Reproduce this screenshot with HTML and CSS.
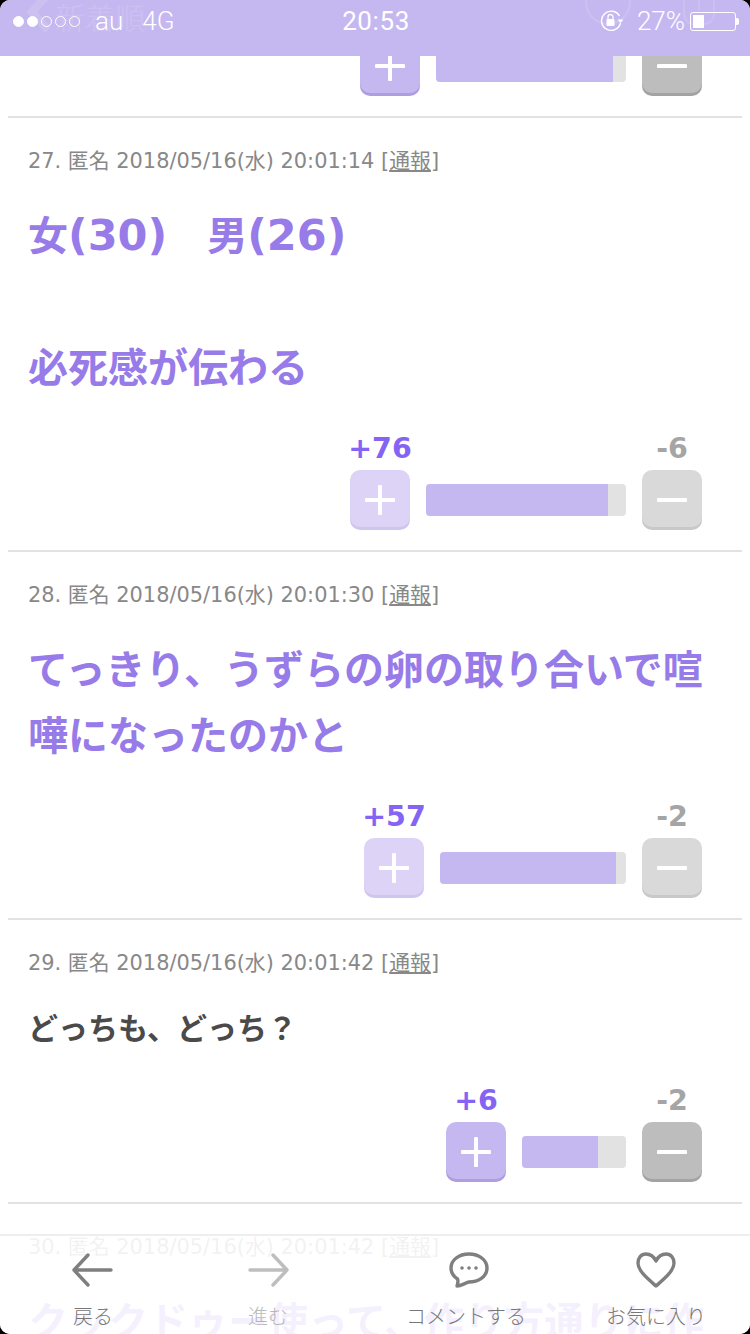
FILE: index.html
```html
<!DOCTYPE html>
<html lang="ja">
<head>
  <meta charset="UTF-8">
  <title>コメント一覧</title>
  <link rel="stylesheet" href="styles.css">
</head>
<body>
  <div class="page">
    <header class="status-bar">
      <div class="ghost-nav">
        <svg class="ghost-back" width="30" height="40" viewBox="0 0 30 40"><path d="M24 -6 L8 12 L24 30" fill="none" stroke="#fff" stroke-width="8"/></svg>
        <span class="ghost-title">新着順</span>
        <svg class="ghost-icons" width="136" height="40" viewBox="0 0 136 40"><circle cx="24" cy="2" r="22" fill="none" stroke="#fff" stroke-width="2"/><rect x="100" y="-14" width="30" height="38" rx="10" fill="none" stroke="#fff" stroke-width="2"/><path d="M115 -4 V10" stroke="#fff" stroke-width="2"/></svg>
      </div>
      <div class="status-left">
        <span class="signal">
          <i class="dot on"></i><i class="dot on"></i><i class="dot"></i><i class="dot"></i><i class="dot"></i>
        </span>
        <span class="carrier">au</span>
        <span class="network">4G</span>
      </div>
      <div class="status-time">20:53</div>
      <div class="status-right">
        <svg width="24" height="22" viewBox="0 0 24 22">
          <path d="M19.5 6 A9.6 9.6 0 1 0 20.5 13" fill="none" stroke="#fff" stroke-width="1.4"/>
          <path d="M17.5 9.5 H23.5 L20.5 13 Z" fill="#fff"/>
          <rect x="6.5" y="9" width="8" height="7" rx="1" fill="#fff"/>
          <path d="M8 9 V7 A2.5 2.5 0 0 1 13 7 V9" fill="none" stroke="#fff" stroke-width="1.3"/>
        </svg>
        <span class="battery-pct">27%</span>
        <span class="battery"><span class="battery-level"></span></span>
        <span class="battery-cap"></span>
      </div>
    </header>

    <main class="comments">
      <section class="comment comment-cut">
        <div class="votes">
          <div class="vote">
            <button class="vote-btn up"><span class="face"><svg width="30" height="30" viewBox="0 0 30 30"><path d="M1.5 15 H28.5 M15 1.5 V28.5" stroke="#fff" stroke-width="4" stroke-linecap="round"/></svg></span></button>
          </div>
          <div class="bar" style="width: 190px"><div class="bar-fill" style="width: 177px"></div></div>
          <div class="vote">
            <button class="vote-btn down"><span class="face"><svg width="30" height="30" viewBox="0 0 30 30"><path d="M1.5 15 H28.5" stroke="#fff" stroke-width="4" stroke-linecap="round"/></svg></span></button>
          </div>
        </div>
      </section>

      <section class="comment">
        <p class="meta">27. 匿名 2018/05/16(水) 20:01:14 [<a class="report">通報</a>]</p>
        <p class="body-large">女<span class="num">(30)</span>　男<span class="num">(26)</span><br><br>必死感が伝わる</p>
        <div class="votes">
          <div class="vote">
            <span class="count count-up">+76</span>
            <button class="vote-btn up faded"><span class="face"><svg width="30" height="30" viewBox="0 0 30 30"><path d="M1.5 15 H28.5 M15 1.5 V28.5" stroke="#fff" stroke-width="4" stroke-linecap="round"/></svg></span></button>
          </div>
          <div class="bar" style="width: 200px"><div class="bar-fill" style="width: 182px"></div></div>
          <div class="vote">
            <span class="count count-down">-6</span>
            <button class="vote-btn down faded"><span class="face"><svg width="30" height="30" viewBox="0 0 30 30"><path d="M1.5 15 H28.5" stroke="#fff" stroke-width="4" stroke-linecap="round"/></svg></span></button>
          </div>
        </div>
      </section>

      <section class="comment">
        <p class="meta">28. 匿名 2018/05/16(水) 20:01:30 [<a class="report">通報</a>]</p>
        <p class="body-large">てっきり、うずらの卵の取り合いで喧嘩になったのかと</p>
        <div class="votes">
          <div class="vote">
            <span class="count count-up">+57</span>
            <button class="vote-btn up faded"><span class="face"><svg width="30" height="30" viewBox="0 0 30 30"><path d="M1.5 15 H28.5 M15 1.5 V28.5" stroke="#fff" stroke-width="4" stroke-linecap="round"/></svg></span></button>
          </div>
          <div class="bar" style="width: 186px"><div class="bar-fill" style="width: 176px"></div></div>
          <div class="vote">
            <span class="count count-down">-2</span>
            <button class="vote-btn down faded"><span class="face"><svg width="30" height="30" viewBox="0 0 30 30"><path d="M1.5 15 H28.5" stroke="#fff" stroke-width="4" stroke-linecap="round"/></svg></span></button>
          </div>
        </div>
      </section>

      <section class="comment">
        <p class="meta">29. 匿名 2018/05/16(水) 20:01:42 [<a class="report">通報</a>]</p>
        <p class="body-small">どっちも、どっち？</p>
        <div class="votes">
          <div class="vote">
            <span class="count count-up">+6</span>
            <button class="vote-btn up"><span class="face"><svg width="30" height="30" viewBox="0 0 30 30"><path d="M1.5 15 H28.5 M15 1.5 V28.5" stroke="#fff" stroke-width="4" stroke-linecap="round"/></svg></span></button>
          </div>
          <div class="bar" style="width: 104px"><div class="bar-fill" style="width: 76px"></div></div>
          <div class="vote">
            <span class="count count-down">-2</span>
            <button class="vote-btn down"><span class="face"><svg width="30" height="30" viewBox="0 0 30 30"><path d="M1.5 15 H28.5" stroke="#fff" stroke-width="4" stroke-linecap="round"/></svg></span></button>
          </div>
        </div>
      </section>

      <section class="comment">
        <p class="meta">30. 匿名 2018/05/16(水) 20:01:42 [<a class="report">通報</a>]</p>
        <p class="body-large">クックドゥー使って、作り方通りに作</p>
      </section>
    </main>

    <nav class="toolbar">
      <a class="tool">
        <svg width="44" height="36" viewBox="0 0 44 36"><path d="M40 18 H3 M17 3 L3 18 L17 33" fill="none" stroke="#7f7f7f" stroke-width="3.4" stroke-linecap="round" stroke-linejoin="round"/></svg>
        <span>戻る</span>
      </a>
      <a class="tool disabled">
        <svg width="44" height="36" viewBox="0 0 44 36"><path d="M4 18 H41 M27 3 L41 18 L27 33" fill="none" stroke="#7f7f7f" stroke-width="3.4" stroke-linecap="round" stroke-linejoin="round"/></svg>
        <span>進む</span>
      </a>
      <a class="tool">
        <svg class="icon-comment" width="44" height="36" viewBox="0 0 44 36"><path d="M22 2 C32 2 40 8 40 16 C40 25 31 30 22 30 C18 31 14 34 10 34 C11 31 11.500 29 10.500 27 C6 24 4 20 4 16 C4 8 12 2 22 2 Z" fill="none" stroke="#7f7f7f" stroke-width="3.4" stroke-linejoin="round"/><circle cx="15" cy="16" r="1.800" fill="#7f7f7f"/><circle cx="22" cy="16" r="1.800" fill="#7f7f7f"/><circle cx="29" cy="16" r="1.800" fill="#7f7f7f"/></svg>
        <span>コメントする</span>
      </a>
      <a class="tool">
        <svg width="44" height="36" viewBox="0 0 44 36"><path d="M22 9 C19 3 15 2 12 2 C7 2 4 6 4 11 C4 19 14 27 22 34 C30 27 40 19 40 11 C40 6 37 2 32 2 C29 2 25 3 22 9 Z" fill="none" stroke="#7f7f7f" stroke-width="3.4" stroke-linejoin="round"/></svg>
        <span>お気に入り</span>
      </a>
    </nav>
  </div>
</body>
</html>
```

FILE: styles.css
```css
* {
  box-sizing: border-box;
}

html, body {
  margin: 0;
  padding: 0;
  background: #000;
}

body {
  font-family: "DejaVu Sans", "Noto Sans CJK JP", sans-serif;
}

.page {
  position: relative;
  width: 750px;
  height: 1334px;
  overflow: hidden;
  background: #fff;
  border-radius: 10px;
}

/* status bar */
.status-bar {
  position: absolute;
  top: 0;
  left: 0;
  width: 100%;
  height: 56px;
  display: flex;
  padding: 6px 11px 0 13px;
  background: #c5b8f0;
  color: #fff;
  font-family: "Roboto", sans-serif;
  font-size: 26px;
  font-weight: 300;
  line-height: 30px;
  overflow: hidden;
}

.ghost-nav {
  position: absolute;
  top: 0;
  left: 0;
  width: 100%;
  height: 40px;
  opacity: 0.12;
}

.ghost-back {
  position: absolute;
  left: 24px;
  top: 0;
}

.ghost-title {
  position: absolute;
  left: 55px;
  top: -4px;
  font-family: "Noto Sans CJK JP", sans-serif;
  font-size: 30px;
  line-height: 40px;
}

.ghost-icons {
  position: absolute;
  left: 584px;
  top: 0;
}

.status-left,
.status-right {
  flex: 1;
  display: flex;
  align-items: center;
  height: 30px;
}

.status-right {
  justify-content: flex-end;
}

.signal {
  display: flex;
  gap: 3px;
  margin-right: 15px;
}

.dot {
  width: 11px;
  height: 11px;
  border: 1px solid #fff;
  border-radius: 50%;
}

.dot.on {
  background: #fff;
}

.carrier {
  margin-right: 19px;
}

.status-time {
  width: 70px;
  text-align: center;
  font-weight: 400;
  letter-spacing: 0.6px;
}

.status-right svg {
  margin-right: 13px;
}

.battery-pct {
  margin-right: 5px;
}

.battery {
  width: 46px;
  height: 19px;
  padding: 2px;
  border: 1px solid #fff;
  border-radius: 3px;
}

.battery-level {
  display: block;
  width: 11px;
  height: 100%;
  background: #fff;
}

.battery-cap {
  width: 3px;
  height: 7px;
  background: #fff;
  border-radius: 0 2px 2px 0;
}

/* comments */
.comment {
  margin: 0 8px;
  padding: 0 20px 20px;
  border-bottom: 2px solid #e2e2e2;
}

.meta {
  margin: 28px 0 27px;
  font-size: 20.9px;
  line-height: 30px;
  color: #888;
}

.report {
  text-decoration: underline;
}

.body-large {
  margin: 0;
  font-size: 40px;
  line-height: 66px;
  font-weight: bold;
  color: #977be9;
}

.num {
  font-size: 43px;
  line-height: 1;
}

.body-small {
  margin: 0;
  font-size: 30px;
  line-height: 48px;
  font-weight: bold;
  color: #4a4a4a;
}

.votes {
  display: flex;
  justify-content: flex-end;
  align-items: flex-end;
  gap: 16px;
  margin-top: 33px;
  padding-right: 20px;
}

.comment-cut .votes {
  margin-top: 36px;
}

.vote {
  width: 60px;
  display: flex;
  flex-direction: column;
  align-items: center;
}

.count {
  font-size: 28.5px;
  line-height: 29px;
  font-weight: bold;
  white-space: nowrap;
  margin-bottom: 7px;
}

.count-up {
  color: #8563f3;
}

.count-down {
  color: #a5a5a5;
}

.vote-btn {
  display: block;
  width: 60px;
  height: 60px;
  padding: 0;
  border: none;
  border-radius: 10px;
}

.face {
  display: flex;
  align-items: center;
  justify-content: center;
  height: 54px;
  border-radius: 10px;
}

.vote-btn.up {
  background: linear-gradient(#c5b8f0 50%, #ae9ee0 50%);
}

.vote-btn.up .face {
  background: #c5b8f0;
}

.vote-btn.up.faded {
  background: linear-gradient(#ddd3f6 50%, #d0c5ee 50%);
}

.vote-btn.up.faded .face {
  background: #ddd3f6;
}

.vote-btn.down {
  background: linear-gradient(#bdbdbd 50%, #a3a3a3 50%);
}

.vote-btn.down .face {
  background: #bdbdbd;
}

.vote-btn.down.faded {
  background: linear-gradient(#d9d9d9 50%, #c8c8c8 50%);
}

.vote-btn.down.faded .face {
  background: #d9d9d9;
}

.bar {
  height: 32px;
  margin-bottom: 14px;
  background: #e2e2e2;
  border-radius: 4px;
  overflow: hidden;
}

.bar-fill {
  height: 100%;
  background: #c5b8f0;
}

/* bottom toolbar */
.toolbar {
  position: absolute;
  left: 0;
  bottom: 0;
  width: 100%;
  height: 100px;
  display: grid;
  grid-template-columns: 186px 164px 232px 148px;
  padding-top: 16px;
  background: rgba(255, 255, 255, 0.89);
  border-top: 2px solid #eee;
}

.tool {
  display: flex;
  flex-direction: column;
  align-items: center;
  gap: 14px;
  font-family: "Noto Sans CJK JP", sans-serif;
  font-size: 20px;
  font-weight: 300;
  line-height: 28px;
  color: #777;
}

.tool.disabled {
  opacity: 0.5;
}

.icon-comment {
  margin-left: 6px;
}
```
